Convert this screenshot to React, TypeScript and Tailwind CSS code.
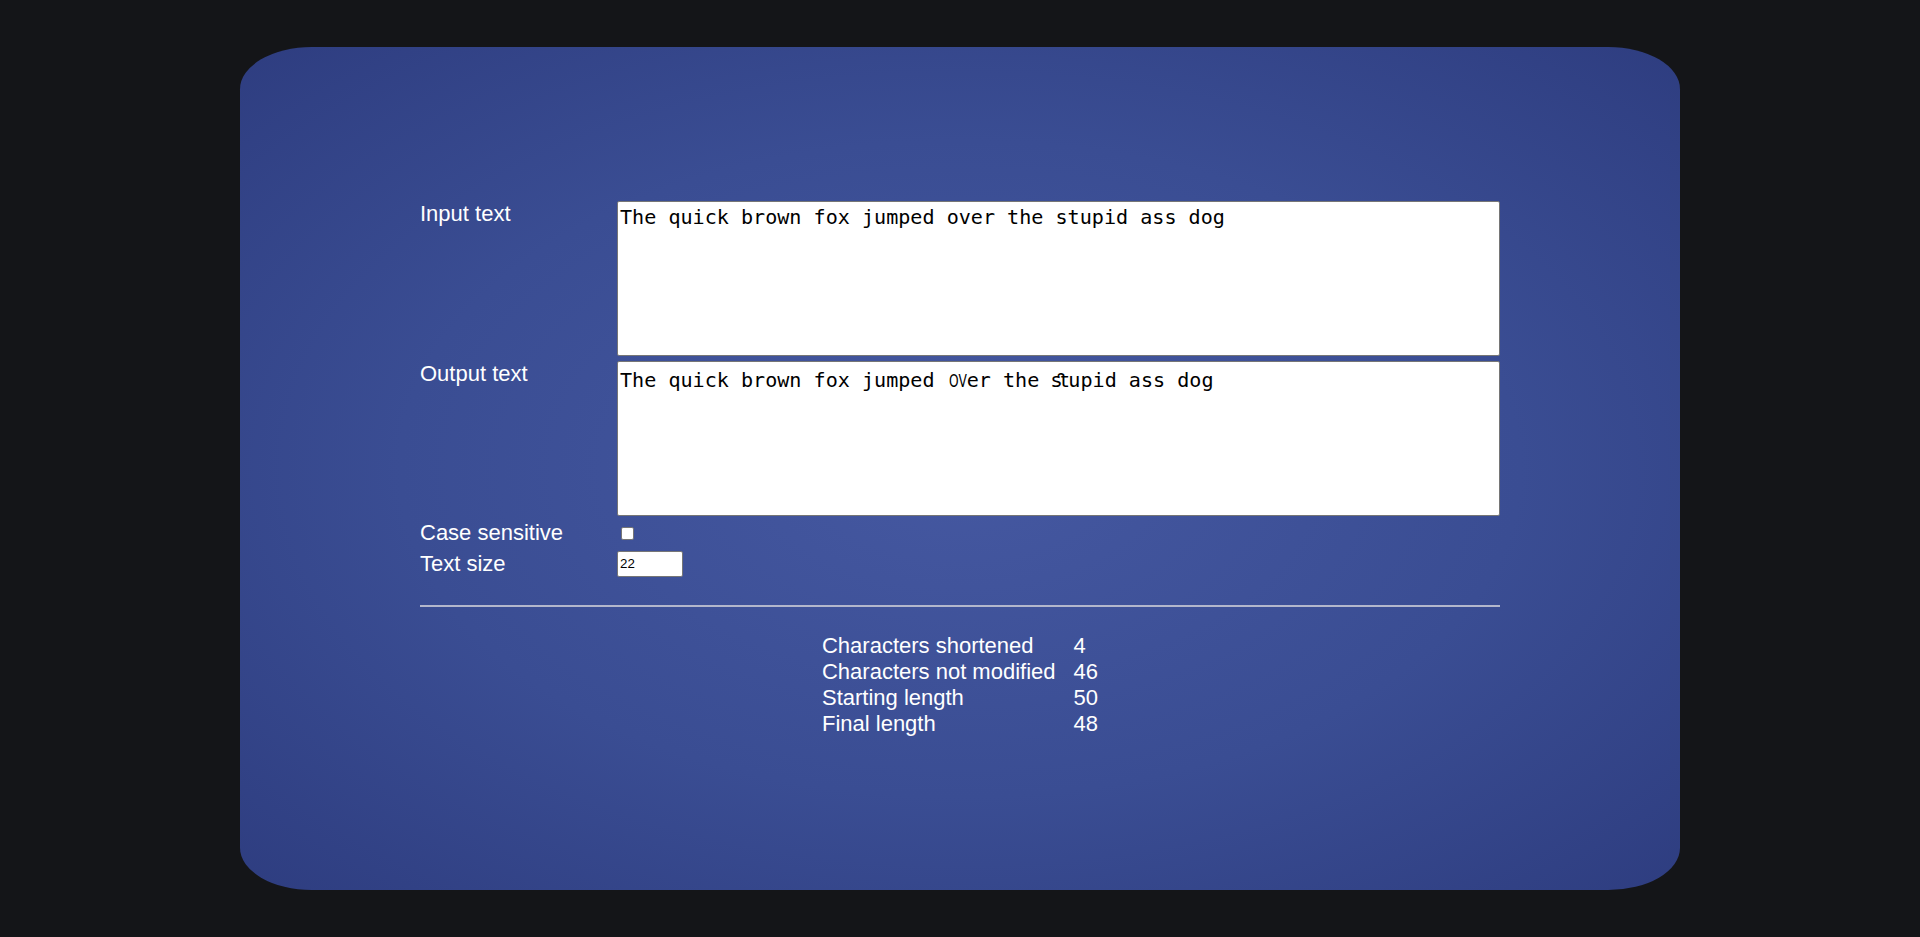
import React from "react";

const labelCls =
  "text-white text-[22px] leading-[25px] font-['Liberation_Sans',Arial,sans-serif]";
const boxCls =
  "h-[155px] w-full bg-white border border-[#767676] rounded-[2px] px-[2px] text-black text-[20.1px] leading-[23px] font-['DejaVu_Sans_Mono',monospace] whitespace-pre overflow-hidden";

export default function App() {
  const stats: [string, string][] = [
    ["Characters shortened", "4"],
    ["Characters not modified", "46"],
    ["Starting length", "50"],
    ["Final length", "48"],
  ];
  return (
    <div className="min-h-screen w-full bg-[#141518] pt-[5vh] overflow-hidden">
      <div className="mx-auto h-[90vh] w-[75%] rounded-[5%] bg-[radial-gradient(ellipse_at_center,#4558a1_0%,#3a4d93_55%,#2e3d80_100%)]">
        <div className="mx-auto w-[75%] pt-[154px]">
          <div className="grid grid-cols-[197px_1fr]">
            <div className={labelCls}>Input text</div>
            <div className={`${boxCls} pt-[4px]`}>The quick brown fox jumped over the stupid ass dog</div>
          </div>
          <div className="mt-[5px] grid grid-cols-[197px_1fr]">
            <div className={labelCls}>Output text</div>
            <div className={`${boxCls} pt-[7px]`}>
              The quick brown fox jumped{" "}
              <span className="inline-block w-[20px] pl-[2px]">
                <span className="inline-block origin-left scale-x-[0.72] text-[17px] font-['DejaVu_Sans',sans-serif]">
                  OV
                </span>
              </span>
              er the{" "}
              <span className="inline-block w-[17px] font-['DejaVu_Sans',sans-serif]">ﬆ</span>
              upid ass dog
            </div>
          </div>
          <div className="mt-[4px] grid h-[25px] grid-cols-[197px_1fr]">
            <div className={labelCls}>Case sensitive</div>
            <div className="pt-[7px] pl-[4px]">
              <div className="h-[13px] w-[13px] rounded-[2px] border border-[#767676] bg-white" />
            </div>
          </div>
          <div className="mt-[6px] grid grid-cols-[197px_1fr]">
            <div className={labelCls}>Text size</div>
            <div>
              <div className="flex h-[26px] w-[66px] items-center rounded-[2px] border border-[#767676] bg-white px-[2px] text-[13.33px] text-black font-['Liberation_Sans',Arial,sans-serif]">
                22
              </div>
            </div>
          </div>
          <div className="mt-[28px] h-[2px] w-full bg-[#b3b7cc]" />
          <div className="mt-[26px] flex justify-center">
            <div className="grid grid-cols-[auto_auto] gap-x-[18px] text-white text-[22px] leading-[26px] font-['Liberation_Sans',Arial,sans-serif]">
              {stats.map(([k, v]) => (
                <React.Fragment key={k}>
                  <div>{k}</div>
                  <div>{v}</div>
                </React.Fragment>
              ))}
            </div>
          </div>
        </div>
      </div>
    </div>
  );
}
